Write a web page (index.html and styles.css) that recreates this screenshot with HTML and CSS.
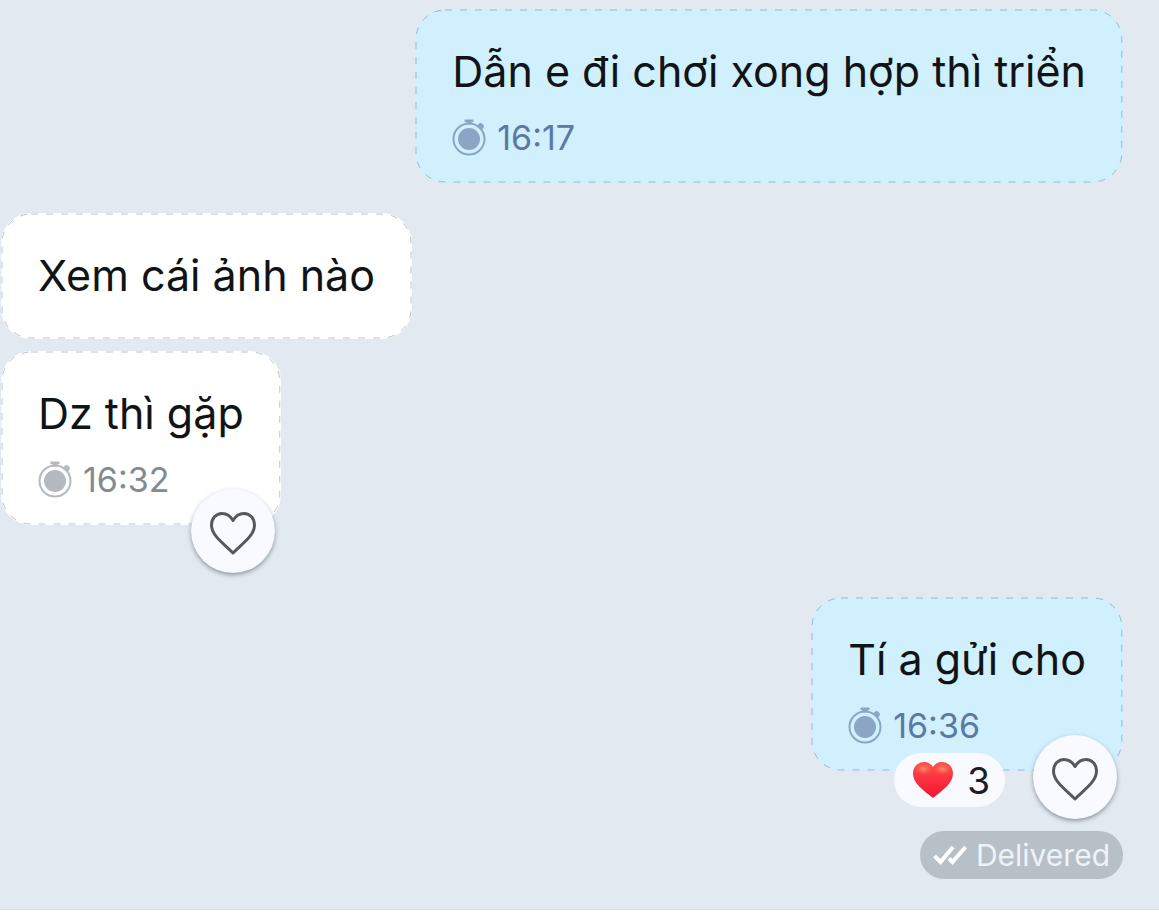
FILE: index.html
```html
<!DOCTYPE html>
<html lang="vi">
<head>
  <meta charset="UTF-8">
  <title>Chat</title>
  <meta name="viewport" content="width=device-width, initial-scale=1.0">
  <link rel="stylesheet" href="styles.css">
</head>
<body>
  <!-- shared icons -->
  <svg class="sprite" aria-hidden="true">
    <symbol id="timer" viewBox="0 0 34 38">
      <circle cx="17" cy="21" r="15.5" fill="none" stroke="currentColor" stroke-width="2"/>
      <circle cx="17" cy="21" r="11" fill="currentColor"/>
      <path d="M12.500 1.500h9v2.500h-2v2.500h-5v-2.500h-2z" fill="currentColor"/>
      <path d="M25 8l2-2.500q1.500-1 3 0l1.500 1.500q1 1.500 0 3l-2 2z" fill="currentColor"/>
    </symbol>
    <symbol id="heart" viewBox="0 0 48 44">
      <path d="M24 9.500C21.500 5 17.500 2.500 13 2.500C7 2.500 2.500 7.500 2.500 14C2.500 24.500 14 32 24 42C34 32 45.500 24.500 45.500 14C45.500 7.500 41 2.500 35 2.500C30.500 2.500 26.500 5 24 9.500Z" fill="none" stroke="currentColor" stroke-width="3" stroke-linejoin="round"/>
    </symbol>
  </svg>

  <main class="chat">
    <div class="message sent">
      <svg class="outline" aria-hidden="true"><rect width="100%" height="100%" rx="29"/></svg>
      <p class="text">Dẫn e đi chơi xong hợp thì triển</p>
      <div class="meta"><svg class="timer"><use href="#timer"/></svg><time>16:17</time></div>
    </div>

    <div class="message received group-start">
      <svg class="outline" aria-hidden="true"><rect width="100%" height="100%" rx="29"/></svg>
      <p class="text">Xem cái ảnh nào</p>
    </div>

    <div class="message received">
      <svg class="outline" aria-hidden="true"><rect width="100%" height="100%" rx="29"/></svg>
      <p class="text">Dz thì gặp</p>
      <div class="meta"><svg class="timer"><use href="#timer"/></svg><time>16:32</time></div>
      <button class="like" type="button" aria-label="Like"><svg><use href="#heart"/></svg></button>
    </div>

    <div class="message sent last">
      <svg class="outline" aria-hidden="true"><rect width="100%" height="100%" rx="29"/></svg>
      <p class="text">Tí a gửi cho</p>
      <div class="meta"><svg class="timer"><use href="#timer"/></svg><time>16:36</time></div>
      <button class="reactions" type="button">
        <svg viewBox="0 0 42 38" aria-hidden="true">
          <defs>
            <linearGradient id="red" x1="0" y1="0" x2="0" y2="1">
              <stop offset="0" stop-color="#f4564a"/>
              <stop offset=".4" stop-color="#fd3543"/>
              <stop offset="1" stop-color="#f01530"/>
            </linearGradient>
            <radialGradient id="shine">
              <stop offset="0" stop-color="#ff9c7c" stop-opacity=".8"/>
              <stop offset="1" stop-color="#ff6a50" stop-opacity="0"/>
            </radialGradient>
          </defs>
          <path d="M21 6C19 2.500 15.500 1 12 1C5.500 1 1 6 1 12.500C1 22.500 11 29 21 37C31 29 41 22.500 41 12.500C41 6 36.500 1 30 1C26.500 1 23 2.500 21 6Z" fill="url(#red)"/>
          <ellipse cx="11.500" cy="8" rx="9" ry="6" fill="url(#shine)"/>
          <ellipse cx="30.500" cy="8" rx="9" ry="6" fill="url(#shine)"/>
        </svg>
        <span>3</span>
      </button>
      <button class="like" type="button" aria-label="Like"><svg><use href="#heart"/></svg></button>
    </div>

    <div class="status">
      <svg viewBox="0 0 34 20" aria-hidden="true">
        <path d="M1.500 11l6 6L20 2M16 13.500l3.500 3.500L32.500 2" fill="none" stroke="currentColor" stroke-width="4"/>
      </svg>
      <span>Delivered</span>
    </div>
  </main>
</body>
</html>
```
FILE: styles.css
```css
body {
  margin: 0;
  background: #fff;
  font-family: Inter, "Noto Sans", sans-serif;
  color: #111415;
}
.sprite {
  position: absolute;
  width: 0;
  height: 0;
}
.chat {
  display: flex;
  flex-direction: column;
  padding: 9px 36px 30px 1px;
  background: #e2e9f1;
  border-bottom: 1px solid #dcdfe3;
}
.message {
  position: relative;
  box-sizing: border-box;
  max-width: 90%;
  padding: 35px 37px 37px;
  border-radius: 30px;
}
/* dashed frame with longer dashes than a css border gives */
.outline {
  position: absolute;
  top: 1px;
  left: 1px;
  width: calc(100% - 2px);
  height: calc(100% - 2px);
  overflow: visible;
  pointer-events: none;
}
.outline rect {
  fill: none;
  stroke: #a3b6c0;
  stroke-width: 1px;
  stroke-dasharray: 7 8;
}
.sent {
  align-self: flex-end;
  background: #d0f0fe;
}
.received {
  align-self: flex-start;
  margin-top: 12px;
  background: #fff;
}
.received .outline rect {
  stroke: #bfc4c9;
}
.group-start {
  margin-top: 30px;
}
.last {
  margin-top: 72px;
}
.text {
  margin: 0;
  font-size: 43px;
  line-height: 54px;
}
.meta {
  display: flex;
  align-items: center;
  gap: 11px;
  height: 38px;
  margin: 20px 0 -10px;
  font-size: 34px;
  color: #838b91;
}
.sent .meta {
  color: #5b79a2;
}
.timer {
  width: 34px;
  height: 38px;
  color: #b4babf;
}
.sent .timer {
  color: #8da5c5;
}
.like {
  position: absolute;
  right: 6px;
  bottom: -48px;
  display: flex;
  align-items: center;
  justify-content: center;
  width: 84px;
  height: 84px;
  padding: 4px 0 0;
  border: 0;
  border-radius: 50%;
  background: #f8faff;
  box-shadow: 0 2px 4px rgba(60, 70, 80, 0.5);
  color: #56585a;
  cursor: pointer;
}
.like svg {
  width: 48px;
  height: 44px;
}
.reactions {
  position: absolute;
  right: 118px;
  bottom: -36px;
  display: flex;
  align-items: center;
  gap: 13px;
  height: 54px;
  padding: 0 15px 0 18px;
  border: 0;
  border-radius: 27px;
  background: #f8faff;
  color: #1c1e20;
  font-family: inherit;
  font-size: 37px;
  cursor: pointer;
}
.reactions svg {
  width: 42px;
  height: 38px;
}
.status {
  display: flex;
  align-items: center;
  align-self: flex-end;
  gap: 9px;
  height: 48px;
  margin-top: 60px;
  padding: 0 13px;
  border-radius: 24px;
  background: #b7c0c7;
  color: #fff;
  font-size: 30px;
}
.status svg {
  width: 34px;
  height: 20px;
}
.status span {
  color: #eff3f7;
}
```
